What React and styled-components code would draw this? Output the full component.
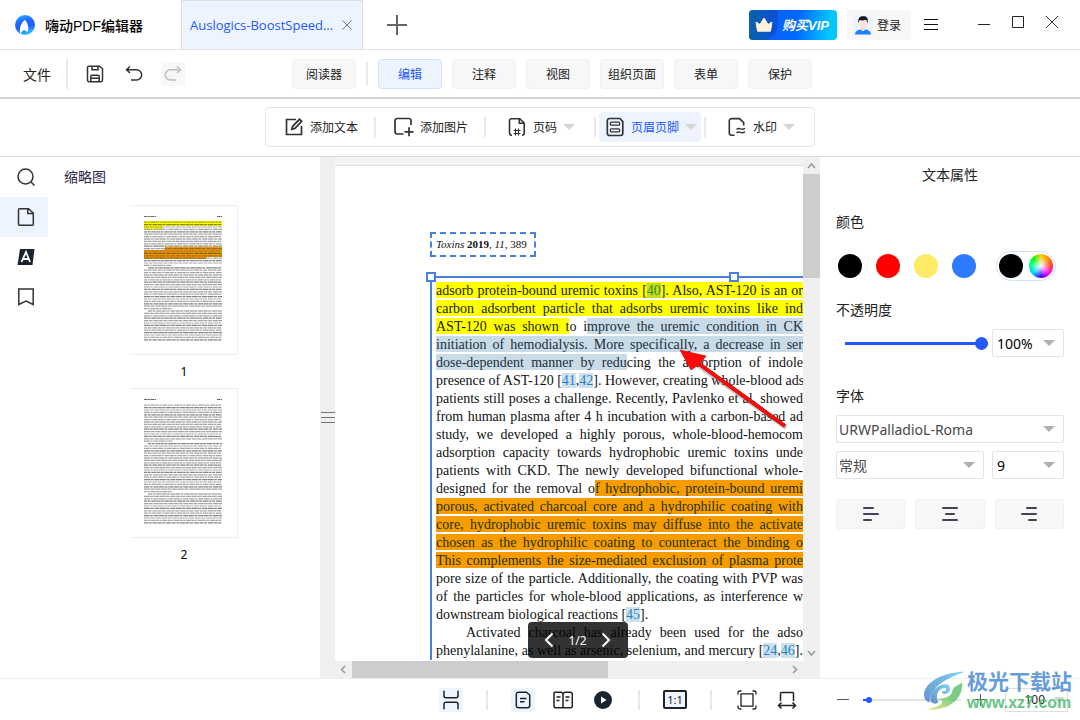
import React from "react";
import styled, { createGlobalStyle, css } from "styled-components";

const blue = "#2457ff";
const frameBlue = "#4a7fdc";

const Icon = ({ size = 20, width = 1.5, children }) => (
  <svg
    width={size}
    height={size}
    viewBox="0 0 20 20"
    fill="none"
    stroke="currentColor"
    strokeWidth={width}
    aria-hidden="true"
  >
    {children}
  </svg>
);

const Logo = () => (
  <svg width="20" height="20" viewBox="0 0 20 20" aria-hidden="true">
    <defs>
      <linearGradient id="logo" x1="0" y1="0" x2="0.3" y2="1">
        <stop offset="0" stopColor="#22c4ff" />
        <stop offset="0.4" stopColor="#2468ff" />
        <stop offset="0.7" stopColor="#1f5dff" />
        <stop offset="1" stopColor="#25bdff" />
      </linearGradient>
    </defs>
    <circle cx="10" cy="10" r="10" fill="url(#logo)" />
    <path d="M10 5C6 7.500 4 13 5.300 19c1.200-2 2.200-3 4-4.200.8 1.400 2.200 1.900 3.700 1.700C14 12 12.500 7.500 10 5z" fill="#fff" />
  </svg>
);

const Crown = () => (
  <svg width="18" height="16" viewBox="0 0 18 16" aria-hidden="true">
    <path d="M1 5l4 2.500L9 1l4 6.500L17 5l-1.500 9.200H2.500z" fill="#fff3dc" stroke="#fff3dc" strokeLinejoin="round" />
  </svg>
);

const Avatar = () => (
  <svg width="20" height="20" viewBox="0 0 20 20" aria-hidden="true">
    <rect width="20" height="20" fill="#eaf3ff" />
    <path d="M2 19.500c0-3 2.500-4.500 5.500-5h5c3 .5 5.500 2 5.500 5z" fill="#1e80ff" />
    <path d="M8 11h4v3.500c-.8 2-3.200 2-4 0z" fill="#ffd9c9" />
    <ellipse cx="10" cy="8.300" rx="4" ry="5" fill="#ffe2d6" />
    <path d="M5.600 8.500C4.500 3 7 1.200 10.500 1.300c4 0 5 2.700 3.900 7.200-.3-2-.8-3-1.700-3.700-2 .8-4.600.7-5.700.2-.9.900-1.200 1.900-1.400 3.500z" fill="#14181f" />
  </svg>
);

const Caret = ({ color = "#d6d6d6" }) => (
  <svg width="12" height="6" viewBox="0 0 12 6" aria-hidden="true">
    <path d="M0 0h12L6 6z" fill={color} />
  </svg>
);

const SaveIcon = () => (
  <Icon>
    <path d="M4 2.200h10.500l3 2.600V16.300a1.400 1.400 0 0 1-1.400 1.400H3.900a1.400 1.400 0 0 1-1.400-1.400V3.600A1.400 1.400 0 0 1 4 2.200zM7 2.500v3.200h6V2.500M5.800 17.500v-5.200a1 1 0 0 1 1-1h6.400a1 1 0 0 1 1 1v5.200M6 14.300h8" />
  </Icon>
);
const UndoIcon = () => (
  <Icon>
    <path d="M6 2.500L2.500 5.700 6 9M2.800 5.700h9.700a5 5 0 0 1 0 10.300H7" />
  </Icon>
);
const RedoIcon = () => (
  <Icon>
    <path d="M14 2.500l3.500 3.200L14 9M17.200 5.700H7.500a5 5 0 0 0 0 10.300H13" />
  </Icon>
);
const AddTextIcon = () => (
  <Icon width={1.7}>
    <path d="M12 2.500H2.500v15h15V9M7.800 12.300l.9-3L15.500 2.300l2.200 2-6.800 7.100z" />
  </Icon>
);
const AddImageIcon = () => (
  <Icon width={1.7}>
    <path d="M9.500 17H3.200A2.200 2.200 0 0 1 1 14.800V3.700A2.200 2.200 0 0 1 3.200 1.500h11.600A2.200 2.200 0 0 1 17 3.700V8M15 10.300v9M10.500 14.800h9" />
  </Icon>
);
const PageCodeIcon = () => (
  <Icon width={1.6}>
    <path d="M5 18.200h-.4A2.200 2.200 0 0 1 2.500 16V3.800a2.200 2.200 0 0 1 2.100-2.100h8.200L17.200 6v10a2.200 2.200 0 0 1-2.200 2.200M12.300 2v4.300h4.600" />
    <path d="M8.500 11.500v7M11.500 11.500v7M6.500 13.500h7M6.500 16.500h7" strokeWidth="1.100" />
  </Icon>
);
const HeaderFooterIcon = () => (
  <Icon width={1.700}>
    <path d="M4.500 1.500h10.300l3 3.100v11.700a2.200 2.200 0 0 1-2.200 2.200H4.500a2.200 2.200 0 0 1-2.200-2.200V3.700a2.200 2.200 0 0 1 2.200-2.200z" />
    <rect x="5.300" y="5.200" width="9.400" height="3" rx="1.200" strokeWidth="1.300" />
    <rect x="5.300" y="11.800" width="9.400" height="3" rx="1.200" strokeWidth="1.300" />
  </Icon>
);
const WatermarkIcon = () => (
  <Icon width={1.600}>
    <path d="M7.500 18.300h-3a2.200 2.200 0 0 1-2.200-2.200V3.800a2.200 2.200 0 0 1 2.200-2.200h8L16.700 5.700v2.800" />
    <path d="M9.500 12.300c1.600-1 2.800-.9 4.200-.4s2.700.4 4.300-.5M9.500 15.800c1.600-1 2.800-.9 4.200-.4s2.700.4 4.300-.5" strokeWidth="1.500" />
  </Icon>
);
const SearchIcon = () => (
  <Icon>
    <circle cx="9.500" cy="9.500" r="7.500" />
    <path d="M15 15l3.500 3.500" />
  </Icon>
);
const PageIcon = () => (
  <Icon>
    <path d="M3.500 1.700h9L17.300 6v11.200a1 1 0 0 1-1 1H3.500a1 1 0 0 1-1-1V2.700a1 1 0 0 1 1-1zM11.800 2v4.600h5.300" />
  </Icon>
);
const AnnotationIcon = () => (
  <Icon>
    <path d="M4 2h14.500L16.500 18H1.500z" fill="#1a2430" stroke="none" />
    <path d="M5.500 15L10 5l4 10M7 12h6" stroke="#fff" strokeWidth="1.800" />
  </Icon>
);
const BookmarkIcon = () => (
  <Icon>
    <path d="M2.800 2h14.400v15.500L10 14l-7.200 3.500z" />
  </Icon>
);

const AlignIcon = ({ d }) => (
  <svg width="16" height="16" viewBox="0 0 16 16" stroke="#45425a" strokeWidth="2" strokeLinecap="round" aria-hidden="true">
    <path d={d} />
  </svg>
);

const ThumbArt = ({ marked }) => {
  const rows = Array.from({ length: 50 }, (_, i) => i);
  const lastRow = marked ? 19 : 16;
  return (
    <svg width="108" height="150" viewBox="0 0 108 150" aria-hidden="true">
      {marked && (
        <>
          <path d="M14 16h78v5H14zM14 21h18v3H14z" fill="#ffff00" />
          <path d="M35 42h57v10H76v2H14V45h21z" fill="#f59a00" />
        </>
      )}
      <path d="M14 11.500h12M87 11.500h5" stroke="#666" strokeWidth="1" strokeDasharray="3 0.500" />
      {rows.map((i) => (
        <path
          key={i}
          d={`M${i === lastRow || i === 37 ? 18 : 14} ${17.200 + i * 2.400}H${i === lastRow - 1 || i === 36 ? 42 : 92}`}
          stroke="#333"
          strokeOpacity={i % 3 === 1 ? 0.600 : 0.450}
          strokeWidth="1.200"
          strokeDasharray={`${3 + (i % 4)} 0.600 ${2 + (i % 3)} 0.800 5 0.500`}
        />
      ))}
    </svg>
  );
};

const tabs = ["编辑", "注释", "视图", "组织页面", "表单", "保护"];

const lines = [
  <><Yellow>adsorb protein-bound uremic toxins [<Cite $on="yellow" href="#r40">40</Cite>]. Also, AST-120 is an or</Yellow></>,
  <><Yellow>carbon adsorbent particle that adsorbs uremic toxins like ind</Yellow></>,
  <><Yellow>AST-120 was shown t</Yellow>o i<Selected>mprove the uremic condition in CK</Selected></>,
  <><Selected>initiation of hemodialysis. More specifically, a decrease in ser</Selected></>,
  <><Selected>dose-dependent manner by redu</Selected>cing the absorption of indole</>,
  <>presence of AST-120 [<Cite href="#r41">41</Cite>,<Cite href="#r42">42</Cite>]. However, creating whole-blood ads</>,
  <>patients still poses a challenge. Recently, Pavlenko et al. showed</>,
  <>from human plasma after 4 h incubation with a carbon-based ad</>,
  <>study, we developed a highly porous, whole-blood-hemocom</>,
  <>adsorption capacity towards hydrophobic uremic toxins unde</>,
  <>patients with CKD. The newly developed bifunctional whole-</>,
  <>designed for the removal o<Orange>f hydrophobic, protein-bound uremi</Orange></>,
  <><Orange>porous, activated charcoal core and a hydrophilic coating with</Orange></>,
  <><Orange>core, hydrophobic uremic toxins may diffuse into the activate</Orange></>,
  <><Orange>chosen as the hydrophilic coating to counteract the binding o</Orange></>,
  <><Orange>This complements the size-mediated exclusion of plasma prote</Orange></>,
  <>pore size of the particle. Additionally, the coating with PVP was</>,
  <>of the particles for whole-blood applications, as interference w</>,
  { short: <>downstream biological reactions [<Cite href="#r45">45</Cite>].</> },
  { indent: <>Activated charcoal has already been used for the adso</> },
  <>phenylalanine, as well as arsenic, selenium, and mercury [<Cite href="#r24">24</Cite>,<Cite href="#r46">46</Cite>].</>,
];

export default function App() {
  return (
    <Window>
      <GlobalStyle />
      <TitleBar>
        <Brand><Logo />嗨动PDF编辑器</Brand>
        <FileTab>
          <FileName href="#file">Auslogics-BoostSpeed...</FileName>
          <PlainButton aria-label="关闭标签">
            <svg width="10" height="10" viewBox="0 0 10 10" stroke="#777"><path d="M0.500 0.500l9 9M9.500 0.500l-9 9" /></svg>
          </PlainButton>
        </FileTab>
        <NewTab aria-label="新建标签">
          <svg width="20" height="20" viewBox="0 0 20 20" stroke="#666" strokeWidth="2"><path d="M10 0v20M0 10h20" /></svg>
        </NewTab>
        <TitleActions>
          <VipButton><CrownBox><Crown /></CrownBox><b>购买VIP</b></VipButton>
          <LoginButton><Avatar />登录</LoginButton>
          <MenuButton aria-label="菜单">
            <svg width="14" height="12" viewBox="0 0 14 12" stroke="#111"><path d="M0 .5h14M0 5.500h14M0 10.500h14" /></svg>
          </MenuButton>
        </TitleActions>
        <WindowButtons>
          <PlainButton aria-label="最小化">
            <svg width="12" height="12" viewBox="0 0 12 12" stroke="#222"><path d="M0 8.500h12" /></svg>
          </PlainButton>
          <PlainButton aria-label="最大化">
            <svg width="12" height="12" viewBox="0 0 12 12" stroke="#222" fill="none"><path d="M.5.5h11v11H.5z" /></svg>
          </PlainButton>
          <PlainButton aria-label="关闭">
            <svg width="12" height="12" viewBox="0 0 12 12" stroke="#333"><path d="M0 0l12 12M12 0L0 12" /></svg>
          </PlainButton>
        </WindowButtons>
      </TitleBar>

      <MenuBar>
        <MenuLeft>
          <FileButton>文件</FileButton>
          <QuickButton aria-label="保存"><SaveIcon /></QuickButton>
          <QuickButton aria-label="撤销"><UndoIcon /></QuickButton>
          <QuickButton aria-label="重做" disabled><RedoIcon /></QuickButton>
        </MenuLeft>
        <ModeTabs>
          <ModeTab>阅读器</ModeTab>
          <Divider $height={23} />
          {tabs.map((tab) => (
            <ModeTab key={tab} $active={tab === "编辑"}>{tab}</ModeTab>
          ))}
        </ModeTabs>
      </MenuBar>

      <ToolArea>
        <ToolStrip>
          <ToolCell><Tool><AddTextIcon />添加文本</Tool></ToolCell>
          <Divider $height={20} />
          <ToolCell><Tool><AddImageIcon />添加图片</Tool></ToolCell>
          <Divider $height={20} />
          <ToolCell><Tool><PageCodeIcon />页码<Caret /></Tool></ToolCell>
          <Divider $height={20} />
          <ToolCell><Tool $active><HeaderFooterIcon />页眉页脚<Caret /></Tool></ToolCell>
          <Divider $height={20} />
          <ToolCell><Tool><WatermarkIcon />水印<Caret /></Tool></ToolCell>
        </ToolStrip>
      </ToolArea>

      <Main>
        <SideNav>
          <SideButton aria-label="搜索"><SearchIcon /></SideButton>
          <SideButton aria-label="缩略图" $active><PageIcon /></SideButton>
          <SideButton aria-label="注释"><AnnotationIcon /></SideButton>
          <SideButton aria-label="书签"><BookmarkIcon /></SideButton>
        </SideNav>
        <Thumbs>
          <ThumbsTitle>缩略图</ThumbsTitle>
          {[1, 2].map((n) => (
            <Thumb key={n}>
              <ThumbPage><ThumbArt marked={n === 1} /></ThumbPage>
              {n}
            </Thumb>
          ))}
        </Thumbs>
        <Splitter>
          <svg width="15" height="12" viewBox="0 0 15 12" stroke="#777"><path d="M1 .5h14M1 5.500h14M1 10.500h14" /></svg>
        </Splitter>

        <Viewer>
          <Page>
            <PageHeader><i>Toxins</i> <b>2019</b>, <i>11</i>, 389</PageHeader>
            <TextFrame>
              <Handle $left={-6} />
              <Handle $left={297} />
              {lines.map((line, i) => (
                <Line key={i} $short={!!line.short} $indent={!!line.indent}>
                  {line.short || line.indent || line}
                </Line>
              ))}
            </TextFrame>
            <Arrow width="120" height="90" viewBox="0 0 120 90" aria-hidden="true">
              <path d="M18 16L107 79" stroke="#777" strokeWidth="4" strokeOpacity=".4" />
              <path d="M16 12L106 77" stroke="#b00000" strokeWidth="4" />
              <path d="M16 12L106 77" stroke="#ff0a0a" strokeWidth="3" />
              <path d="M1 1L27 7 21 15 12 21z" fill="#ff0a0a" stroke="#c40000" strokeWidth=".6" />
            </Arrow>
          </Page>
          <VScroll>
            <svg width="17" height="17" viewBox="0 0 17 17" fill="none" stroke="#999" strokeWidth="1.500"><path d="M5 11l3.500-4L12 11" /></svg>
            <VThumb />
            <svg width="17" height="17" viewBox="0 0 17 17" fill="none" stroke="#999" strokeWidth="1.500"><path d="M5 7l3.500 4L12 7" /></svg>
          </VScroll>
          <HScroll>
            <svg width="17" height="17" viewBox="0 0 17 17" fill="none" stroke="#999" strokeWidth="1.500"><path d="M10 5L6.500 8.500 10 12" /></svg>
            <HThumb />
            <svg width="17" height="17" viewBox="0 0 17 17" fill="none" stroke="#999" strokeWidth="1.500"><path d="M7 5l3.500 3.500L7 12" /></svg>
          </HScroll>
          <Pager>
            <PlainButton aria-label="上一页">
              <svg width="10" height="16" viewBox="0 0 10 16" fill="none" stroke="#fff" strokeWidth="2"><path d="M8.500 1.500L2 8l6.500 6.500" /></svg>
            </PlainButton>
            1/2
            <PlainButton aria-label="下一页">
              <svg width="10" height="16" viewBox="0 0 10 16" fill="none" stroke="#fff" strokeWidth="2"><path d="M1.500 1.500L8 8l-6.500 6.500" /></svg>
            </PlainButton>
          </Pager>
        </Viewer>

        <Props>
          <PropsTitle>文本属性</PropsTitle>
          <Label as="h3">颜色</Label>
          <Swatches>
            <Swatch $color="#000" aria-label="黑色" />
            <Swatch $color="#f00" aria-label="红色" />
            <Swatch $color="#ffeb66" aria-label="黄色" />
            <Swatch $color="#2f7bff" aria-label="蓝色" />
            <PickerPill>
              <Swatch $color="#000" aria-label="当前颜色" />
              <Swatch
                $color="radial-gradient(circle, #fff 0%, rgba(255,255,255,0) 60%), conic-gradient(#fc0, #f80, #f33, #f0f, #40f, #0cf, #0f9, #0f0, #fc0)"
                aria-label="自定义颜色"
              />
            </PickerPill>
          </Swatches>
          <Label htmlFor="opacity">不透明度</Label>
          <OpacityRow>
            <Range id="opacity" type="range" defaultValue="100" />
            <SelectBox value="100%" label="不透明度" $dark />
          </OpacityRow>
          <Label htmlFor="family">字体</Label>
          <FontGrid>
            <SelectBox id="family" value="URWPalladioL-Roma" label="字体" wide />
            <SelectBox value="常规" label="字形" />
            <SelectBox value="9" label="字号" $dark />
          </FontGrid>
          <AlignRow>
            <AlignButton aria-label="左对齐"><AlignIcon d="M1 2h9M1 8h14M1 14h7" /></AlignButton>
            <AlignButton aria-label="居中"><AlignIcon d="M1 2h14M4 8h8M1 14h14" /></AlignButton>
            <AlignButton aria-label="右对齐"><AlignIcon d="M6 2h9M1 8h14M8 14h7" /></AlignButton>
          </AlignRow>
        </Props>
      </Main>

      <StatusBar>
        <StatusButton $active aria-label="分页">
          <Icon><path d="M3 .8v5a2 2 0 0 0 2 2h10a2 2 0 0 0 2-2v-5M3 19.200v-5a2 2 0 0 1 2-2h10a2 2 0 0 1 2 2v5" /></Icon>
        </StatusButton>
        <Divider $height={20} />
        <StatusGroup>
          <StatusButton $active aria-label="单页">
            <Icon>
              <path d="M5.500 2.200h8L16.700 5v10.500a2.200 2.200 0 0 1-2.200 2.200h-9a2.200 2.200 0 0 1-2.200-2.200V4.400a2.200 2.200 0 0 1 2.200-2.200zM7 8.500h6.500M7 11.800h4.500" />
            </Icon>
          </StatusButton>
          <StatusButton aria-label="双页">
            <Icon>
              <path d="M2 2.200h6.500L10 3.700v14H2.500a1.500 1.500 0 0 1-1.500-1.500v-13a1 1 0 0 1 1-1zM11.500 2.200H18L19.300 3.700v12.500a1.500 1.500 0 0 1-1.500 1.500H10M10 4l1.500-1.800M3.500 7h4M3.500 10.500h3M12.500 7h4M12.500 10.500h3" />
            </Icon>
          </StatusButton>
          <StatusButton aria-label="播放">
            <Icon>
              <circle cx="10" cy="10" r="9" fill="#1a2430" stroke="none" />
              <path d="M8 6.500v7l5.500-3.500z" fill="#fff" stroke="none" />
            </Icon>
          </StatusButton>
        </StatusGroup>
        <Divider $height={20} />
        <ActualSize>1:1</ActualSize>
        <Divider $height={20} />
        <StatusGroup>
          <StatusButton aria-label="适合页面">
            <Icon width={1.300}>
              <path d="M4 3.800h12v12.400H4zM1 4.500V3a2 2 0 0 1 2-2h1.500M15.500 1H17a2 2 0 0 1 2 2v1.500M19 15.500V17a2 2 0 0 1-2 2h-1.500M4.500 19H3a2 2 0 0 1-2-2v-1.500" />
            </Icon>
          </StatusButton>
          <StatusButton aria-label="适合宽度">
            <Icon>
              <path d="M3.500 11V3.500a1 1 0 0 1 1-1h11a1 1 0 0 1 1 1V11M1.500 15.500h17M4.500 12.500l-3 3 3 3M15.500 12.500l3 3-3 3" />
            </Icon>
          </StatusButton>
        </StatusGroup>
        <Zoom>
          <PlainButton aria-label="缩小">
            <svg width="12" height="12" viewBox="0 0 12 12" stroke="#555"><path d="M0 5.500h12" /></svg>
          </PlainButton>
          <ZoomRange type="range" defaultValue="3" aria-label="缩放" />
          <PlainButton aria-label="放大">
            <svg width="12" height="12" viewBox="0 0 12 12" stroke="#555"><path d="M0 5.500h12M5.500 0v12" /></svg>
          </PlainButton>
          <ZoomBox>
            <input defaultValue="100" aria-label="缩放比例" />
            <Caret />
          </ZoomBox>
        </Zoom>
        <SiteMark>
          <svg width="44" height="42" viewBox="0 0 46 42" aria-hidden="true">
            <defs>
              <linearGradient id="swoosh" x1="0" y1="1" x2="1" y2="0">
                <stop offset="0" stopColor="#3f78c0" />
                <stop offset="1" stopColor="#63c8f4" />
              </linearGradient>
              <linearGradient id="leaf" x1="0" y1="1" x2="1" y2="0">
                <stop offset="0" stopColor="#e6e86a" />
                <stop offset=".6" stopColor="#58bf6c" />
              </linearGradient>
            </defs>
            <path d="M44 1C24 1 3 10 1 24c0 5 2 8 6 9-1-12 12-24 37-32z" fill="url(#swoosh)" />
            <path d="M8 32C6 22 15 14 25 14c4 1 5 9-1 10-3 1-5-1-4-3 2 1 5-1 4-3-7-1-12 7-8 14 0 3-6 3-8 0z" fill="url(#swoosh)" />
            <path d="M41 12c-4 3-9 4-10 8-1 7-8 9-16 9 9 2 7 8-12 11 20 3 39-8 38-28z" fill="url(#leaf)" />
          </svg>
          <SiteText>
            <strong>极光下载站</strong>
            <span>www.xz7.com</span>
          </SiteText>
        </SiteMark>
      </StatusBar>
    </Window>
  );
}

function SelectBox({ id, value, label, wide, $dark }) {
  return (
    <SelectWrap $wide={wide}>
      <Select id={id} aria-label={label} defaultValue={value} $dark={$dark}>
        <option>{value}</option>
      </Select>
      <Caret color="#b0b0b0" />
    </SelectWrap>
  );
}

const GlobalStyle = createGlobalStyle`
  * { box-sizing: border-box; }
  body {
    margin: 0;
    background: #fff;
    color: #222;
    font-family: "Noto Sans", "Noto Sans CJK SC", sans-serif;
    font-size: 14px;
  }
  button, input, select { font: inherit; color: inherit; }
  svg { display: block; flex: none; }
`;

const Window = styled.div`
  min-height: 100vh;
  display: flex;
  flex-direction: column;
`;

const PlainButton = styled.button`
  display: flex;
  align-items: center;
  padding: 0;
  border: 0;
  background: none;
  cursor: pointer;
`;

const Divider = styled.span`
  flex: none;
  width: 2px;
  height: ${(p) => p.$height}px;
  background: #e9e9e9;
`;

const TitleBar = styled.header`
  height: 50px;
  display: flex;
  align-items: center;
  border-bottom: 1px solid #e4e4e4;
`;

const Brand = styled.div`
  width: 181px;
  padding-left: 15px;
  display: flex;
  align-items: center;
  gap: 10px;
  font-family: "Liberation Sans", "Noto Sans CJK SC", sans-serif;
  font-weight: 500;
  color: #000;
`;

const FileTab = styled.div`
  width: 182px;
  align-self: stretch;
  padding: 0 10px 0 8px;
  display: flex;
  align-items: center;
  justify-content: space-between;
  border: 1px solid #dedede;
  border-bottom: 0;
  background: #edf4ff;
`;

const FileName = styled.a`
  color: ${blue};
  font-family: "Open Sans", sans-serif;
  font-size: 13px;
  text-decoration: none;
`;

const NewTab = styled(PlainButton)`
  margin-left: 24px;
`;

const TitleActions = styled.div`
  margin-left: auto;
  display: flex;
  align-items: center;
  gap: 10px;
`;

const MenuButton = styled(PlainButton)`
  padding-left: 3px;
`;

const VipButton = styled.button`
  width: 88px;
  height: 30px;
  padding: 0;
  display: flex;
  align-items: center;
  gap: 4px;
  border: 0;
  border-radius: 4px;
  overflow: hidden;
  color: #fff;
  background: linear-gradient(100deg, #0a62f0 20%, #0068ff 55%, #00c8ff 90%);

  b {
    font-style: italic;
    font-size: 13px;
    font-family: "Liberation Sans", "Noto Sans CJK SC", sans-serif;
    white-space: nowrap;
  }
`;

const CrownBox = styled.span`
  width: 29px;
  height: 30px;
  display: flex;
  align-items: center;
  justify-content: center;
  border-bottom-right-radius: 16px;
  background: linear-gradient(90deg, #0a62a8, #0b4fd8);
`;

const LoginButton = styled.button`
  width: 64px;
  height: 30px;
  padding: 0 6px;
  display: flex;
  align-items: center;
  gap: 4px;
  border: 0;
  border-radius: 4px;
  background: #f7f7f7;
  font-size: 12px;
  white-space: nowrap;
`;

const WindowButtons = styled.div`
  margin: 0 22px 6px 40px;
  display: flex;
  gap: 22px;
`;

const MenuBar = styled.nav`
  height: 49px;
  display: grid;
  grid-template-columns: 1fr auto 1fr;
  align-items: center;
  border-bottom: 2px solid #d6d6d6;
`;

const MenuLeft = styled.div`
  display: flex;
  align-items: center;
  gap: 15px;
`;

const FileButton = styled(PlainButton)`
  height: 30px;
  padding: 0 15px 0 23px;
  border-right: 2px solid #e9e9e9;
`;

const QuickButton = styled(PlainButton)`
  width: 24px;
  height: 24px;
  justify-content: center;
  border-radius: 3px;
  color: #333;

  &:disabled {
    color: #bdbdbd;
    background: #f7f7f7;
  }
`;

const ModeTabs = styled.div`
  padding-left: 24px;
  display: flex;
  align-items: center;
  gap: 10px;
`;

const ModeTab = styled.button`
  width: 64px;
  height: 30px;
  padding: 0;
  border: 1px solid #f1f1f1;
  border-radius: 4px;
  background: #f7f7f7;
  font-size: 12px;
  white-space: nowrap;
  ${(p) =>
    p.$active &&
    css`
      color: ${blue};
      border-color: #cfe1fb;
      background: #edf4ff;
    `}
`;

const ToolArea = styled.div`
  padding: 8px 0 9px;
  display: flex;
  justify-content: center;
  border-bottom: 1px solid #dcdcdc;
`;

const ToolStrip = styled.div`
  width: 550px;
  height: 40px;
  display: flex;
  align-items: center;
  border: 1px solid #e4e4e4;
  border-radius: 4px;
`;

const ToolCell = styled.div`
  flex: 1 1 0;
  display: flex;
  justify-content: center;
`;

const Tool = styled.button`
  height: 30px;
  padding: 0 4px 0 6px;
  display: flex;
  align-items: center;
  gap: 6px;
  border: 0;
  border-radius: 4px;
  background: ${(p) => (p.$active ? "#edf4ff" : "none")};
  color: ${(p) => (p.$active ? blue : "#222")};
  font-size: 12px;
  white-space: nowrap;

  svg:first-child { color: #333; }
`;

const Main = styled.main`
  flex: 1;
  display: grid;
  grid-template-columns: 48px 272px 15px minmax(0, 1fr) 260px;
`;

const SideNav = styled.nav``;

const SideButton = styled(PlainButton)`
  width: 48px;
  height: 40px;
  padding-left: 16px;
  color: #333;
  background: ${(p) => (p.$active ? "#edf4ff" : "none")};
`;

const Thumbs = styled.aside`
  display: flex;
  flex-direction: column;
  align-items: center;
`;

const ThumbsTitle = styled.h2`
  align-self: stretch;
  margin: 0 0 8px;
  padding-left: 16px;
  font-size: 14px;
  font-weight: 400;
  line-height: 40px;
  color: #2b2947;
`;

const Thumb = styled.div`
  display: flex;
  flex-direction: column;
  align-items: center;
  font-size: 12px;
  line-height: 33px;
  color: #000;
`;

const ThumbPage = styled.div`
  height: 150px;
  box-shadow: inset -1px 0 #eee, inset 0 1px #eee, inset 0 -1px #eee;
`;

const Splitter = styled.div`
  display: flex;
  align-items: center;
  background: #efefef;
`;

const Viewer = styled.section`
  position: relative;
  display: grid;
  grid-template-columns: minmax(0, 1fr) 17px;
  grid-template-rows: minmax(0, 1fr) 17px;
  background: #f0f0f0;
`;

const Page = styled.article`
  position: relative;
  overflow: hidden;
  padding: 67px 0 0 95px;
  border-top: 8px solid #f3f3f4;
  background: #fff;
  box-shadow: inset 0 1px #dfdfe4;
  font-family: "Liberation Serif", serif;
  color: #111;
`;

const PageHeader = styled.div`
  width: 106px;
  height: 25px;
  padding-left: 4px;
  border: 2px dashed ${frameBlue};
  font-size: 11px;
  line-height: 21px;
  white-space: nowrap;
`;

const TextFrame = styled.div`
  position: relative;
  margin-top: 19px;
  padding: 4px 0 0 4px;
  border: 2px solid ${frameBlue};
  border-width: 2px 0 0 2px;
`;

const Handle = styled.span`
  position: absolute;
  top: -6px;
  left: ${(p) => p.$left}px;
  width: 10px;
  height: 10px;
  border: 2px solid ${frameBlue};
  background: #fff;
`;

const Line = styled.div`
  height: 18px;
  padding-left: ${(p) => (p.$indent ? 30 : 0)}px;
  font-size: 14px;
  line-height: 18px;
  white-space: nowrap;
  text-align-last: ${(p) => (p.$short ? "left" : "justify")};
`;

function Yellow(props) {
  return <Mark $color="#ffff00" {...props} />;
}
function Orange(props) {
  return <Mark $color="#f79c00" $ink="#1d3300" {...props} />;
}
function Selected(props) {
  return <Mark $color="#c9dbe7" $ink="#20303c" {...props} />;
}

const Mark = styled.mark`
  padding: 1px 0 0;
  background: ${(p) => p.$color};
  color: ${(p) => p.$ink || "#1b1b00"};
`;

function Cite({ $on, ...rest }) {
  return <CiteLink $yellow={$on === "yellow"} {...rest} />;
}

const CiteLink = styled.a`
  color: ${(p) => (p.$yellow ? "#3c8a00" : "#1f82c0")};
  background: ${(p) => (p.$yellow ? "#c3d92c" : "#cfe0ec")};
  text-decoration: none;
`;

const Arrow = styled.svg`
  position: absolute;
  top: 184px;
  left: 344px;
`;

const VScroll = styled.div`
  display: flex;
  flex-direction: column;
`;

const VThumb = styled.div`
  height: 104px;
  margin-bottom: auto;
  background: #cdcdcd;
`;

const HScroll = styled.div`
  display: flex;
`;

const HThumb = styled.div`
  width: 256px;
  margin-right: auto;
  background: #cdcdcd;
`;

const Pager = styled.div`
  position: absolute;
  bottom: 20px;
  left: 50%;
  transform: translateX(-50%);
  width: 100px;
  height: 36px;
  padding: 0 16px;
  display: flex;
  align-items: center;
  justify-content: space-between;
  border-radius: 4px;
  background: rgba(0, 0, 0, 0.8);
  color: #fff;
  font-size: 12px;
`;

const Props = styled.aside`
  padding: 0 16px;
`;

const PropsTitle = styled.h2`
  margin: 0;
  font-size: 14px;
  font-weight: 400;
  line-height: 36px;
  text-align: center;
`;

const Label = styled.label`
  display: block;
  margin: 0;
  padding-top: 18px;
  font-size: 14px;
  font-weight: 400;
  line-height: 22px;
`;

const Swatches = styled.div`
  padding: 18px 8px 0 2px;
  display: flex;
  align-items: center;
  gap: 14px;
`;

const Swatch = styled.button`
  width: 24px;
  height: 24px;
  padding: 0;
  border: 0;
  border-radius: 50%;
  background: ${(p) => p.$color};
`;

const PickerPill = styled.div`
  height: 30px;
  margin-left: auto;
  padding: 0 2px;
  display: flex;
  align-items: center;
  gap: 6px;
  border: 1px solid #d3e2fb;
  border-radius: 15px;
`;

const OpacityRow = styled.div`
  padding: 8px 0 10px 9px;
  display: grid;
  grid-template-columns: minmax(0, 1fr) 72px;
  gap: 4px;
  align-items: center;
`;

const thumbStyle = css`
  appearance: none;
  border: 0;
  border-radius: 50%;
  background: ${blue};
`;

const Range = styled.input`
  appearance: none;
  width: 100%;
  height: 13px;
  margin: 0;
  background: linear-gradient(${blue}, ${blue}) center / 100% 3px no-repeat;

  &::-webkit-slider-thumb {
    ${thumbStyle}
    width: 13px;
    height: 13px;
  }
`;

const FontGrid = styled.div`
  padding: 8px 0 20px;
  display: grid;
  grid-template-columns: minmax(0, 1fr) 72px;
  gap: 8px;
`;

const SelectWrap = styled.div`
  position: relative;
  grid-column: ${(p) => (p.$wide ? "1 / -1" : "auto")};

  svg {
    position: absolute;
    top: 11px;
    right: 9px;
    pointer-events: none;
  }
`;

const Select = styled.select`
  appearance: none;
  width: 100%;
  height: 28px;
  display: block;
  padding: 0 20px 0 ${(p) => (p.$dark ? 4 : 2)}px;
  border: 1px solid #e3e3e6;
  border-radius: 2px;
  background: #fff;
  color: ${(p) => (p.$dark ? "#000" : "#4a4a4a")};
`;

const AlignRow = styled.div`
  display: grid;
  grid-template-columns: repeat(3, 1fr);
  gap: 10px;
`;

const AlignButton = styled.button`
  height: 30px;
  display: flex;
  align-items: center;
  justify-content: center;
  border: 1px solid #f0f0f0;
  border-radius: 3px;
  background: #f7f7f7;
`;

const StatusBar = styled.footer`
  position: relative;
  height: 42px;
  padding: 0 12px 0 439px;
  display: flex;
  align-items: center;
  gap: 23px;
  border-top: 1px solid #efefef;
`;

const StatusGroup = styled.div`
  display: flex;
  align-items: center;
  gap: 16px;
`;

const StatusButton = styled(PlainButton)`
  flex: none;
  width: 24px;
  height: 24px;
  justify-content: center;
  border-radius: 3px;
  color: #222;
  background: ${(p) => (p.$active ? "#edf4ff" : "none")};
`;

const ActualSize = styled.button`
  flex: none;
  width: 24px;
  height: 19px;
  padding: 0;
  border: 2px solid #222;
  border-radius: 2px;
  background: #edf4ff;
  font-size: 11px;
  line-height: 14px;
`;

const Zoom = styled.div`
  flex: 1;
  min-width: 0;
  margin-left: 15px;
  display: flex;
  align-items: center;
  gap: 14px;
`;

const ZoomRange = styled.input`
  appearance: none;
  flex: 1;
  min-width: 0;
  height: 6px;
  margin: 0;
  background: linear-gradient(90deg, ${blue} 6%, #e5e5e5 6%) center / 100% 2px no-repeat;

  &::-webkit-slider-thumb {
    ${thumbStyle}
    width: 6px;
    height: 6px;
  }
`;

const ZoomBox = styled.span`
  flex: none;
  width: 63px;
  height: 24px;
  margin-left: 4px;
  padding-right: 2px;
  display: flex;
  align-items: center;
  justify-content: space-between;
  border: 1px solid #dedede;

  input {
    width: 39px;
    padding: 0;
    border: 0;
    background: none;
    font-size: 12px;
    text-align: right;
  }
`;

const SiteMark = styled.div`
  position: absolute;
  right: 8px;
  bottom: 8px;
  display: flex;
  opacity: 0.8;
  pointer-events: none;
`;

const SiteText = styled.div`
  display: flex;
  flex-direction: column;
  font-family: "Liberation Sans", "Noto Sans CJK SC", sans-serif;

  strong {
    color: #3f86d2;
    font-size: 21px;
    line-height: 24px;
  }

  span {
    color: #3fb665;
    font-size: 16px;
    font-weight: 700;
    line-height: 18px;
  }
`;
